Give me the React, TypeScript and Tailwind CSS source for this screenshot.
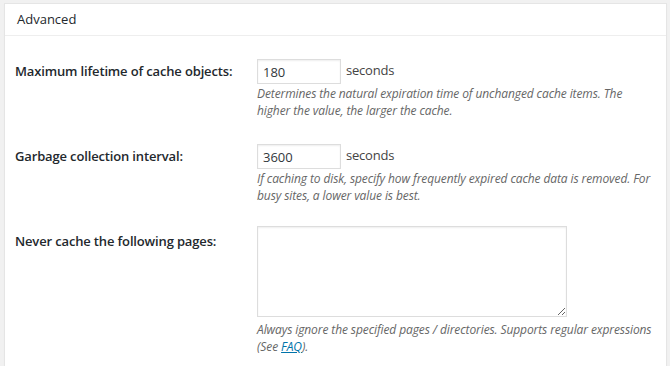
export default function App() {
    return (
        <div
            className="w-[670px] h-[366px] overflow-hidden bg-[#f1f1f1] pt-[3px] pl-[4px]"
            style={{ fontFamily: '"Open Sans", "Noto Sans", sans-serif' }}
        >
            <div className="w-[663px] h-[400px] bg-white border border-[#e5e5e5] shadow-[0_1px_1px_rgba(0,0,0,0.04)]">
                {/* Header */}
                <div className="h-[32px] border-b border-[#eeeeee] flex items-center pl-[12px] text-[13px] text-[#23282d]">
                    Advanced
                </div>

                {/* Body */}
                <div className="pt-[23px] pl-[10px] text-[#23282d]">
                    {/* Lifetime */}
                    <div className="flex">
                        <div className="w-[242px] h-[25px] flex items-center text-[13px] tracking-[-0.15px] font-semibold">
                            Maximum lifetime of cache objects:
                        </div>
                        <div>
                            <div className="flex items-center gap-[5px]">
                                <input
                                    type="text"
                                    defaultValue="180"
                                    className="w-[84px] h-[25px] border border-[#dddddd] px-[5px] text-[13px] text-[#32373c] shadow-[inset_0_1px_2px_rgba(0,0,0,0.07)] outline-none"
                                />
                                <span className="text-[13px] tracking-[-0.2px] text-[#444] -mt-[2px]">seconds</span>
                            </div>
                            <p className="mt-[1px] w-[390px] text-[12px] tracking-[-0.1px] leading-[17px] italic text-[#666]">
                                Determines the natural expiration time of unchanged cache items. The higher the value, the larger the cache.
                            </p>
                        </div>
                    </div>

                    {/* Garbage collection */}
                    <div className="flex mt-[25px]">
                        <div className="w-[242px] h-[25px] flex items-center text-[13px] tracking-[-0.15px] font-semibold">
                            Garbage collection interval:
                        </div>
                        <div>
                            <div className="flex items-center gap-[5px]">
                                <input
                                    type="text"
                                    defaultValue="3600"
                                    className="w-[84px] h-[25px] border border-[#dddddd] px-[5px] text-[13px] text-[#32373c] shadow-[inset_0_1px_2px_rgba(0,0,0,0.07)] outline-none"
                                />
                                <span className="text-[13px] tracking-[-0.2px] text-[#444] -mt-[2px]">seconds</span>
                            </div>
                            <p className="mt-[1px] w-[400px] text-[12px] tracking-[-0.1px] leading-[17px] italic text-[#666]">
                                If caching to disk, specify how frequently expired cache data is removed. For busy sites, a lower value is best.
                            </p>
                        </div>
                    </div>

                    {/* Rejected pages */}
                    <div className="flex mt-[22px]">
                        <div className="w-[242px] pt-[5px] text-[13px] tracking-[-0.15px] leading-[20px] font-semibold">
                            Never cache the following pages:
                        </div>
                        <div>
                            <textarea className="block w-[310px] h-[91px] border border-[#dddddd] shadow-[inset_0_1px_2px_rgba(0,0,0,0.07)] outline-none" />
                            <p className="mt-[4px] w-[400px] text-[12px] tracking-[-0.1px] leading-[17px] italic text-[#666]">
                                Always ignore the specified pages / directories. Supports regular expressions (See{' '}
                                <a href="#" className="text-[#0073aa] underline">FAQ</a>).
                            </p>
                        </div>
                    </div>
                </div>
            </div>
        </div>
    );
}
